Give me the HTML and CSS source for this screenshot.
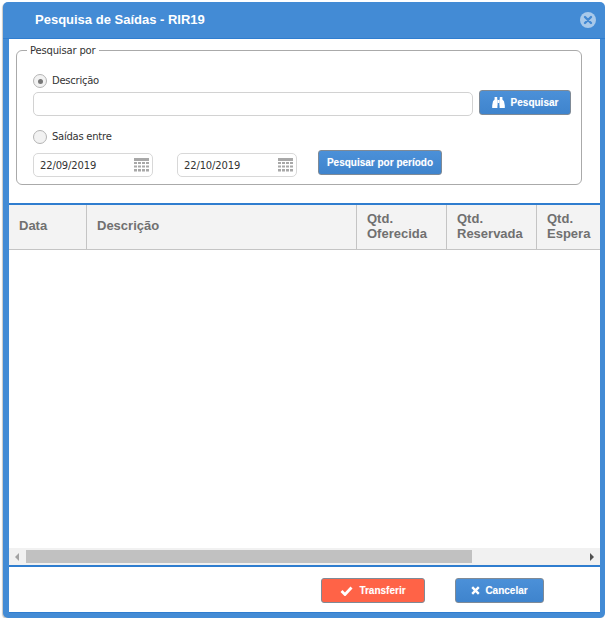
FILE: index.html
```html
<!DOCTYPE html>
<html lang="en">
<head>
    <meta charset="UTF-8">
    <meta name="viewport" content="width=device-width, initial-scale=1.0">
    <title>Pesquisa de Saídas - RIR19</title>
    <link rel="stylesheet" href="styles.css">
</head>
<body>
    <div class="dialog">
        <div class="dialog-header">
            <span class="dialog-title">Pesquisa de Saídas - RIR19</span>
            <svg class="close-icon" width="16" height="16" viewBox="0 0 16 16">
                <circle cx="8" cy="8" r="8" fill="#a9c9ea"/>
                <path d="M5 5l6 6M11 5l-6 6" stroke="#4389d4" stroke-width="2.4" stroke-linecap="round"/>
            </svg>
        </div>

        <div class="dialog-body">
            <div class="search-area">
                <fieldset class="search-box">
                    <legend>Pesquisar por</legend>

                    <div class="radio-row first">
                        <span class="radio checked"></span>
                        <label>Descrição</label>
                    </div>
                    <div class="desc-row">
                        <input type="text" class="text-input desc-input">
                        <button type="button" class="btn btn-search">
                            <svg width="13" height="11" viewBox="0 0 13 11">
                                <path d="M2.6 0h2.6v2.4H5.6V8.5H5.4V11H.2V8.6L1 4.2 2.6 2.4zM7.8 0h2.6v2.4L12 4.2l.8 4.4V11H7.6V8.5H7.4V2.4h.4z" fill="#fff"/>
                                <rect x="5.6" y="3" width="1.8" height="3" fill="#fff"/>
                            </svg>
                            Pesquisar
                        </button>
                    </div>

                    <div class="radio-row">
                        <span class="radio"></span>
                        <label>Saídas entre</label>
                    </div>
                    <div class="period-row">
                        <div class="date-input">
                            <span>22/09/2019</span>
                            <svg class="cal-icon" width="15" height="15" viewBox="0 0 15 15">
                                <path d="M0 0h15v3H0zM0 4h3v2H0zM4 4h3v2H4zM8 4h3v2H8zM12 4h3v2h-3zM0 7.500h3v2H0zM4 7.500h3v2H4zM8 7.500h3v2H8zM12 7.500h3v2h-3zM0 11h3v2.500H0zM4 11h3v2.500H4zM8 11h3v2.500H8zM12 11h3v2.500h-3z" fill="#a8a8a8"/>
                            </svg>
                        </div>
                        <div class="date-input">
                            <span>22/10/2019</span>
                            <svg class="cal-icon" width="15" height="15" viewBox="0 0 15 15">
                                <path d="M0 0h15v3H0zM0 4h3v2H0zM4 4h3v2H4zM8 4h3v2H8zM12 4h3v2h-3zM0 7.500h3v2H0zM4 7.500h3v2H4zM8 7.500h3v2H8zM12 7.500h3v2h-3zM0 11h3v2.500H0zM4 11h3v2.500H4zM8 11h3v2.500H8zM12 11h3v2.500h-3z" fill="#a8a8a8"/>
                            </svg>
                        </div>
                        <button type="button" class="btn btn-period">Pesquisar por período</button>
                    </div>
                </fieldset>
            </div>

            <div class="grid-area">
                <div class="grid-head">
                    <div class="col col-data">Data</div>
                    <div class="col col-desc">Descrição</div>
                    <div class="col col-qtd">Qtd.<br>Oferecida</div>
                    <div class="col col-qtd">Qtd.<br>Reservada</div>
                    <div class="col col-qtd last">Qtd.<br>Espera</div>
                </div>
                <div class="grid-rows"></div>
                <div class="h-scroll">
                    <span class="arrow arrow-left"></span>
                    <div class="scroll-track"><div class="scroll-thumb"></div></div>
                    <span class="arrow arrow-right"></span>
                </div>
            </div>

            <div class="dialog-footer">
                <button type="button" class="btn btn-red">
                    <svg width="13" height="10" viewBox="0 0 13 10"><path d="M1.500 5l3.500 3.500L11.500 1.500" fill="none" stroke="#fff" stroke-width="2.800"/></svg>
                    Transferir
                </button>
                <button type="button" class="btn btn-cancel">
                    <svg width="9" height="9" viewBox="0 0 9 9"><path d="M1.200 1.200l6.600 6.600M7.800 1.200L1.200 7.800" fill="none" stroke="#fff" stroke-width="2.400"/></svg>
                    Cancelar
                </button>
            </div>
        </div>
    </div>
</body>
</html>
```

FILE: styles.css
```css
* { box-sizing: border-box; }
body { margin: 0; background: #fff; font-family: "Liberation Sans", Arial, sans-serif; }
.dialog { width: 602px; height: 616px; margin: 2px 0 0 3px; background: #438bd5; border-radius: 5px; box-shadow: -1px 1px 1px #c8c8c8; display: flex; flex-direction: column; padding: 0 5px 5px 6px; }
.dialog-header { height: 37px; display: flex; align-items: center; justify-content: space-between; padding: 0 9px 2px 32px; margin: 0 -5px 0 -6px; border-bottom: 1px solid #2f7dcf; flex: none; }
.dialog-title { color: #fff; font-size: 13px; font-weight: bold; }
.close-icon { margin-top: 2px; }
.dialog-body { flex: 1; background: #fff; display: flex; flex-direction: column; border-bottom: 1px solid #2f7dcf; }

.search-area { height: 164px; padding: 6px 18px 0 7px; flex: none; }
.search-box { margin: 0; height: 140px; border: 1px solid #aaa; border-radius: 6px; padding: 0 10px 0 16px; }
.search-box legend { margin-left: -6px; padding: 0 3px; color: #333; font-family: "DejaVu Sans", sans-serif; font-size: 10px; letter-spacing: -0.17px; }
.radio-row { display: flex; align-items: center; gap: 5px; height: 16px; font-family: "DejaVu Sans", sans-serif; font-size: 10px; letter-spacing: -0.25px; color: #333; margin-top: 11px; }
.radio-row.first { margin-top: 17px; }
.radio-row label { margin-top: -2px; }
.radio { width: 14px; height: 14px; border: 1px solid #b4b4b4; border-radius: 50%; background: #f2f2f2; display: flex; align-items: center; justify-content: center; }
.radio.checked::after { content: ""; width: 5px; height: 5px; border-radius: 50%; background: #777; }
.desc-row { display: flex; align-items: flex-start; margin-top: 1px; gap: 6px; height: 28px; }
.text-input { width: 440px; height: 24px; margin-top: 2px; border: 1px solid #d2d2d2; border-radius: 5px; background: #fff; }
.btn { border: 1px solid #7f8a96; border-radius: 3px; color: #fff; font-family: "Liberation Sans", Arial, sans-serif; font-size: 10px; font-weight: bold; height: 25px; padding: 0; display: flex; align-items: center; justify-content: center; gap: 6px; background: linear-gradient(#4b90d8, #3f84cd); text-shadow: 0 0 1px rgba(255,255,255,0.3); }
.btn-search { width: 92px; }
.period-row { display: flex; align-items: flex-start; margin-top: 6px; }
.date-input { width: 120px; height: 24px; margin-top: 2px; margin-right: 24px; border: 1px solid #d8d8d8; border-radius: 5px; display: flex; align-items: center; justify-content: space-between; padding: 0 3px 0 6px; font-family: "DejaVu Sans", sans-serif; font-size: 10px; letter-spacing: -0.15px; color: #333; }
.btn-period { width: 124px; margin-top: -1px; margin-left: -3px; }

.grid-area { flex: 1; display: flex; flex-direction: column; border-top: 2px solid #2f7dcf; border-bottom: 2px solid #2f7dcf; }
.grid-head { display: flex; height: 45px; flex: none; background: #f3f3f3; border-bottom: 1px solid #c4c4c4; overflow: hidden; font-size: 13px; font-weight: bold; color: #707070; }
.col { border-right: 1px solid #c4c4c4; padding-left: 10px; flex: none; line-height: 15px; display: flex; align-items: center; }
.col-data { width: 78px; padding-bottom: 4px; }
.col-desc { width: 270px; padding-bottom: 4px; }
.col-qtd { width: 90px; display: block; padding-top: 6px; }
.col-qtd.last { border-right: none; }
.grid-rows { flex: 1; }
.h-scroll { height: 17px; flex: none; background: #f1f1f1; display: flex; align-items: center; }
.arrow { width: 0; height: 0; border-top: 4px solid transparent; border-bottom: 4px solid transparent; flex: none; }
.arrow-left { border-right: 4px solid #a3a3a3; margin: 0 7px 0 6px; }
.arrow-right { border-left: 4px solid #505050; margin: 0 6px 0 5px; }
.scroll-track { flex: 1; height: 13px; }
.scroll-thumb { width: 446px; height: 13px; background: #c1c1c1; }

.dialog-footer { height: 45px; flex: none; display: flex; padding: 11px 0 0 312px; gap: 30px; }
.btn-red { width: 104px; background: #ff6347; }
.btn-cancel { width: 89px; gap: 5px; }
```
